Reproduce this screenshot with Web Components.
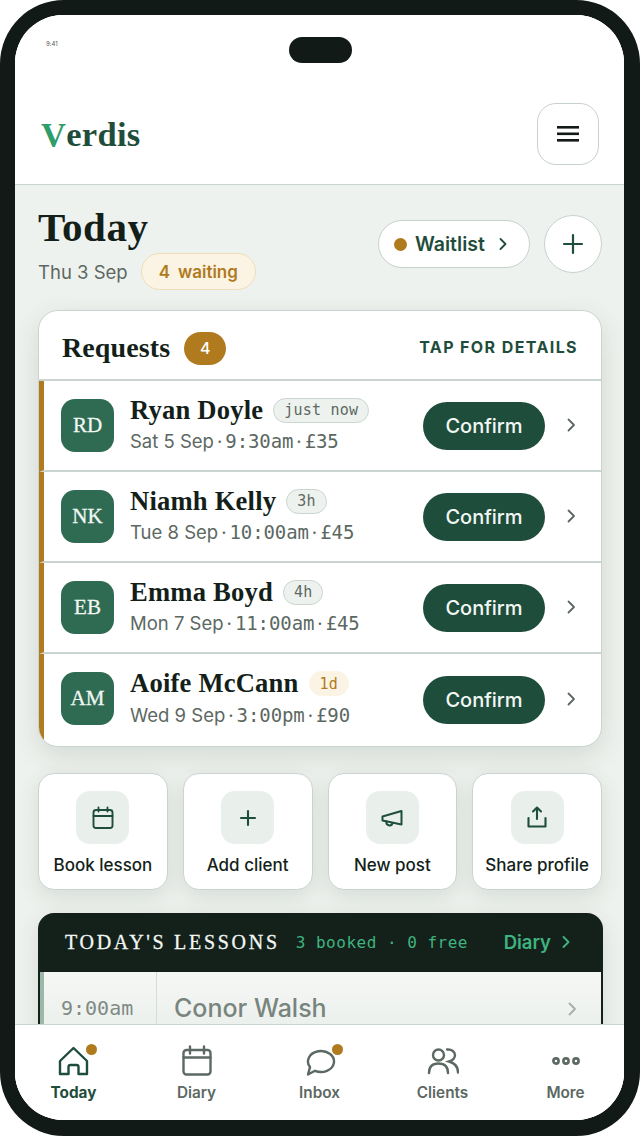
<!DOCTYPE html>
<html lang="en">
<head>
<meta charset="utf-8">
<title>Verdis</title>
<style>
html, body { margin: 0; padding: 0; background: #fff; }
body { font-family: Inter, "Liberation Sans", sans-serif; color: #141f1a; }
</style>
</head>
<body>
<phone-frame>
  <app-header></app-header>
  <main-scroll>
    <today-head></today-head>
    <request-card>
      <request-row initials="RD" age="just now" date="Sat 5 Sep" time="9:30am" price="£35">Ryan Doyle</request-row>
      <request-row initials="NK" age="3h" date="Tue 8 Sep" time="10:00am" price="£45">Niamh Kelly</request-row>
      <request-row initials="EB" age="4h" date="Mon 7 Sep" time="11:00am" price="£45">Emma Boyd</request-row>
      <request-row initials="AM" age="1d" warm date="Wed 9 Sep" time="3:00pm" price="£90" last>Aoife McCann</request-row>
    </request-card>
    <quick-row>
      <quick-tile>
        <svg slot="icon" width="24" height="24" viewBox="0 0 24 24" fill="none" stroke="#1f4d3c" stroke-width="1.9" stroke-linecap="round" stroke-linejoin="round"><rect x="2.5" y="4" width="19" height="18" rx="2.5"/><path d="M2.5 10h19M7.5 1.5v4M16.5 1.5v4"/></svg>
        Book lesson
      </quick-tile>
      <quick-tile>
        <svg slot="icon" width="24" height="24" viewBox="0 0 24 24" fill="none" stroke="#1f4d3c" stroke-width="2.1" stroke-linecap="round"><path d="M12 5v14M5 12h14"/></svg>
        Add client
      </quick-tile>
      <quick-tile>
        <svg slot="icon" width="24" height="24" viewBox="0 0 24 24" fill="none" stroke="#1f4d3c" stroke-width="2" stroke-linejoin="round" stroke-linecap="round"><path d="M2.500 10.500 21.500 5V18.500L2.500 14.500Z"/><path d="M6.500 15.500a3 3 0 0 0 6 1.500"/></svg>
        New post
      </quick-tile>
      <quick-tile>
        <svg slot="icon" width="24" height="24" viewBox="0 0 24 24" fill="none" stroke="#1f4d3c" stroke-width="2.100" stroke-linecap="round" stroke-linejoin="round"><path d="M12 13V1.500M8 5.500 12 1.500 16 5.500"/><path d="M3.500 12V20.500H20.500V12"/></svg>
        Share profile
      </quick-tile>
    </quick-row>
    <lessons-panel></lessons-panel>
  </main-scroll>
  <tab-bar>
    <tab-item active dot>
      <svg slot="icon" width="32" height="32" viewBox="0 0 32 32" fill="none" stroke="#1f4d3c" stroke-width="2.4" stroke-linejoin="round"><path d="M2 16 15.5 3 29 16V29H20.5V22Q20.5 20 18.5 20H12.5Q10.5 20 10.5 22V29H2Z"/></svg>
      Today
    </tab-item>
    <tab-item>
      <svg slot="icon" width="32" height="32" viewBox="0 0 32 32" fill="none" stroke="#5c6862" stroke-width="2.4" stroke-linecap="round" stroke-linejoin="round"><rect x="2.5" y="5" width="27" height="24.5" rx="3"/><path d="M2.5 12.5h27M9 1.5v7M23 1.5v7"/></svg>
      Diary
    </tab-item>
    <tab-item dot>
      <svg slot="icon" width="32" height="32" viewBox="0 0 32 32" fill="none" stroke="#5c6862" stroke-width="2.4" stroke-linejoin="round"><path d="M4 29.500 6 22.100A13 10.500 0 1 1 11 25.800Z"/></svg>
      Inbox
    </tab-item>
    <tab-item>
      <svg slot="icon" width="32" height="32" viewBox="0 0 32 32" fill="none" stroke="#5c6862" stroke-width="2.4" stroke-linecap="round"><circle cx="11.500" cy="10" r="5.500"/><path d="M2 28C2 21 6 18.500 11.500 18.500S21 21 21 28"/><path d="M20 4.500C25 4 28 7 28 10S25 15.500 22 16.500C27.500 18 31 21.500 31 27.500"/></svg>
      Clients
    </tab-item>
    <tab-item>
      <svg slot="icon" width="32" height="32" viewBox="0 0 32 32" fill="none" stroke="#5c6862" stroke-width="2.600"><circle cx="6" cy="16" r="2.600"/><circle cx="16" cy="16" r="2.600"/><circle cx="26" cy="16" r="2.600"/></svg>
      More
    </tab-item>
  </tab-bar>
</phone-frame>

<script>
var SERIF = '"Liberation Serif", "DejaVu Serif", serif';
var MONO = '"DejaVu Sans Mono", "Liberation Mono", monospace';

// device shell, the notch lies over the screen
var tpl_phone = document.createElement("template");
tpl_phone.innerHTML = `
<style>
:host {
  display: block;
  box-sizing: border-box;
  width: 640px;
  height: 1136px;
  border: solid #111a16;
  border-width: 15px 16px 16px 15px;
  border-radius: 64px;
  background: #fff;
  position: relative;
}
.screen {
  height: 100%;
  border-radius: 48px;
  overflow: hidden;
  display: flex;
  flex-direction: column;
  background: #fff;
}
.notch {
  position: absolute;
  left: 274px;
  top: 22px;
  width: 63px;
  height: 26px;
  border-radius: 13px;
  background: #111a16;
}
</style>
<div class="screen"><slot></slot></div>
<div class="notch"></div>`;

class PhoneFrame extends HTMLElement {
  constructor() {
    super();
    this.attachShadow({ mode: "open" });
    this.shadowRoot.appendChild(tpl_phone.content.cloneNode(true));
  }
}
customElements.define("phone-frame", PhoneFrame);

var tpl_header = document.createElement("template");
tpl_header.innerHTML = `
<style>
:host {
  display: block;
  flex: none;
  height: 170px;
  box-sizing: border-box;
  padding: 25px 25px 0 26px;
  background: #fff;
  border-bottom: 1.500px solid #cbd5cf;
}
.time { font: 400 6px Inter, sans-serif; color: #555; margin-left: 5px; height: 8px; line-height: 8px; }
.bar { display: flex; align-items: center; justify-content: space-between; margin-top: 55px; }
.logo { font: 700 34.500px ${SERIF}; color: #1f4d3c; letter-spacing: 0.3px; }
.logo b { color: #2f9d6b; }
.menu {
  box-sizing: border-box;
  width: 62px; height: 62px;
  border: 1.5px solid #c6d2cb;
  border-radius: 19px;
  display: flex; align-items: center; justify-content: center;
}
</style>
<div class="time">9:41</div>
<div class="bar">
  <div class="logo"><b>V</b>erdis</div>
  <div class="menu">
    <svg width="22" height="18" viewBox="0 0 22 18" fill="#111a16"><rect y="1" width="22" height="2.600"/><rect y="7.500" width="22" height="2.600"/><rect y="14" width="22" height="2.600"/></svg>
  </div>
</div>`;

class AppHeader extends HTMLElement {
  constructor() {
    super();
    this.attachShadow({ mode: "open" });
    this.shadowRoot.appendChild(tpl_header.content.cloneNode(true));
  }
}
customElements.define("app-header", AppHeader);

var tpl_main = document.createElement("template");
tpl_main.innerHTML = `
<style>
:host {
  display: block;
  flex: 1;
  min-height: 0;
  overflow: hidden;
  box-sizing: border-box;
  padding: 0 22px 0 23px;
  background: #eef2ee;
}
</style>
<slot></slot>`;

class MainScroll extends HTMLElement {
  constructor() {
    super();
    this.attachShadow({ mode: "open" });
    this.shadowRoot.appendChild(tpl_main.content.cloneNode(true));
  }
}
customElements.define("main-scroll", MainScroll);

var tpl_today = document.createElement("template");
tpl_today.innerHTML = `
<style>
:host {
  display: flex;
  justify-content: space-between;
  height: 125px;
  box-sizing: border-box;
  padding-top: 19px;
}
h1 { margin: 0; font: 700 41px/46px ${SERIF}; color: #141f1a; letter-spacing: 0.5px; }
.sub { display: flex; align-items: center; gap: 13px; margin-top: 3px; font-size: 18.500px; color: #5c6862; }
.waiting {
  box-sizing: border-box;
  height: 37px;
  padding: 0 17px;
  display: flex; align-items: center; gap: 8px;
  border: 1.5px solid #eeddb8;
  border-radius: 19px;
  background: #fbf3e3;
  color: #b07a1e;
  font-size: 17px;
  font-weight: 600;
}
.actions { display: flex; align-items: center; gap: 14px; height: 58px; margin-top: 11px; }
.pill {
  box-sizing: border-box;
  width: 152px; height: 48px;
  padding: 0 21px 0 15px;
  display: flex; align-items: center;
  border: 1.5px solid #c6d2cb;
  border-radius: 24px;
  background: #fff;
  color: #1f4d3c;
  font-size: 19.500px;
  font-weight: 600;
}
.pill i { width: 13px; height: 13px; border-radius: 50%; background: #b07a1e; margin-right: 8px; }
.pill svg { margin-left: auto; }
.plus {
  box-sizing: border-box;
  width: 58px; height: 58px;
  border: 1.5px solid #c6d2cb;
  border-radius: 50%;
  background: #fff;
  display: flex; align-items: center; justify-content: center;
}
</style>
<div>
  <h1>Today</h1>
  <div class="sub">
    <span>Thu 3 Sep</span>
    <span class="waiting"><span>4</span><span>waiting</span></span>
  </div>
</div>
<div class="actions">
  <div class="pill"><i></i>Waitlist
    <svg width="10" height="14" viewBox="0 0 10 14" fill="none" stroke="#1f4d3c" stroke-width="1.8" stroke-linecap="round" stroke-linejoin="round"><path d="M2.500 2 7.500 7 2.500 12"/></svg>
  </div>
  <div class="plus">
    <svg width="22" height="22" viewBox="0 0 22 22" fill="none" stroke="#1f4d3c" stroke-width="2.200" stroke-linecap="round"><path d="M11 2v18M2 11h18"/></svg>
  </div>
</div>`;

class TodayHead extends HTMLElement {
  constructor() {
    super();
    this.attachShadow({ mode: "open" });
    this.shadowRoot.appendChild(tpl_today.content.cloneNode(true));
  }
}
customElements.define("today-head", TodayHead);

var tpl_card = document.createElement("template");
tpl_card.innerHTML = `
<style>
:host {
  display: block;
  box-sizing: border-box;
  height: 436.500px;
  border: 1.5px solid #cbd5cf;
  border-radius: 20px;
  background: #fff;
  overflow: hidden;
  box-shadow: 0 8px 26px rgba(30,55,42,.13);
}
.head {
  box-sizing: border-box;
  height: 69.500px;
  padding: 7px 23px 0 23px;
  display: flex;
  align-items: center;
  border-bottom: 2px solid #cbd5cf;
}
h2 { margin: 0; font: 700 28px ${SERIF}; color: #141f1a; letter-spacing: 0.1px; }
.count {
  margin-left: 14px;
  width: 42px; height: 33px;
  border-radius: 17px;
  background: #b07a1e;
  color: #fff;
  font-size: 16px;
  font-weight: 500;
  display: flex; align-items: center; justify-content: center;
}
.hint { margin-left: auto; margin-top: -3px; font-size: 16px; font-weight: 700; letter-spacing: 1.400px; color: #1f4d3c; }
</style>
<div class="head">
  <h2>Requests</h2>
  <span class="count">4</span>
  <span class="hint">TAP FOR DETAILS</span>
</div>
<slot></slot>`;

class RequestCard extends HTMLElement {
  constructor() {
    super();
    this.attachShadow({ mode: "open" });
    this.shadowRoot.appendChild(tpl_card.content.cloneNode(true));
  }
}
customElements.define("request-card", RequestCard);

var tpl_row = document.createElement("template");
tpl_row.innerHTML = `
<style>
:host {
  display: flex;
  align-items: center;
  box-sizing: border-box;
  height: 91.200px;
  padding: 0 24px 0 17px;
  border-left: 5px solid #b07a1e;
  border-bottom: 2px solid #cbd5cf;
}
:host([last]) { border-bottom-color: transparent; }
.avatar {
  flex: none;
  width: 53px; height: 53px;
  border-radius: 14px;
  background: #2f6b52;
  color: #f2f7f3;
  font: 400 21px ${SERIF};
  -webkit-text-stroke: 0.3px #f2f7f3;
  display: flex; align-items: center; justify-content: center;
}
.info { flex: 1; min-width: 0; margin: 0 0 3px 16px; }
.top { display: flex; align-items: center; gap: 10px; height: 30px; }
.name { font: 700 26.600px ${SERIF}; color: #141f1a; letter-spacing: 0.2px; white-space: nowrap; }
.age {
  box-sizing: border-box;
  height: 25px;
  padding: 0 10px;
  display: flex; align-items: center;
  border: 1.500px solid #cbd5cf;
  border-radius: 13px;
  background: #eef2ee;
  color: #5c6862;
  font: 400 15px ${MONO};
  letter-spacing: 0.2px;
}
:host([warm]) .age { background: #fbf3e3; border-color: #fbf3e3; color: #b07a1e; }
.sub { display: flex; align-items: center; margin-top: 5px; font-size: 18.500px; color: #5c6862; white-space: nowrap; }
.sub .m { font-family: ${MONO}; font-size: 19px; letter-spacing: -0.100px; }
.sub i { font-style: normal; margin: 0 3px; }
.go {
  flex: none;
  width: 122px; height: 48px;
  margin-top: 2px;
  border-radius: 24px;
  background: #1f4d3c;
  color: #f2f7f3;
  font-size: 20px;
  font-weight: 500;
  display: flex; align-items: center; justify-content: center;
}
svg { flex: none; margin-left: 21px; }
</style>
<div class="avatar"></div>
<div class="info">
  <div class="top"><span class="name"><slot></slot></span><span class="age"></span></div>
  <div class="sub"><span class="d"></span><i>·</i><span class="m t"></span><i>·</i><span class="m p"></span></div>
</div>
<div class="go">Confirm</div>
<svg width="11" height="16" viewBox="0 0 11 16" fill="none" stroke="#5c6862" stroke-width="1.800" stroke-linecap="round" stroke-linejoin="round"><path d="M2.500 2.500 8 8 2.500 13.500"/></svg>`;

class RequestRow extends HTMLElement {
  constructor() {
    super();
    this.attachShadow({ mode: "open" });
    this.shadowRoot.appendChild(tpl_row.content.cloneNode(true));
  }
  connectedCallback() {
    var root = this.shadowRoot;
    root.querySelector(".avatar").textContent = this.getAttribute("initials");
    root.querySelector(".age").textContent = this.getAttribute("age");
    root.querySelector(".d").textContent = this.getAttribute("date");
    root.querySelector(".t").textContent = this.getAttribute("time");
    root.querySelector(".p").textContent = this.getAttribute("price");
  }
}
customElements.define("request-row", RequestRow);

var tpl_quick = document.createElement("template");
tpl_quick.innerHTML = `
<style>
:host {
  display: grid;
  grid-template-columns: repeat(4, 1fr);
  gap: 15px;
  margin-top: 26.500px;
}
</style>
<slot></slot>`;

class QuickRow extends HTMLElement {
  constructor() {
    super();
    this.attachShadow({ mode: "open" });
    this.shadowRoot.appendChild(tpl_quick.content.cloneNode(true));
  }
}
customElements.define("quick-row", QuickRow);

var tpl_tile = document.createElement("template");
tpl_tile.innerHTML = `
<style>
:host {
  display: flex;
  flex-direction: column;
  align-items: center;
  box-sizing: border-box;
  height: 116.500px;
  padding-top: 17px;
  border: 1.500px solid #cbd5cf;
  border-radius: 16px;
  background: #fff;
  box-shadow: 0 6px 22px rgba(30,55,42,.12);
  color: #141f1a;
  font-size: 17px;
  font-weight: 500;
  white-space: nowrap;
}
.ic {
  width: 53px; height: 53px;
  border-radius: 14px;
  background: #e9f0eb;
  display: flex; align-items: center; justify-content: center;
  margin-bottom: 10.500px;
}
</style>
<div class="ic"><slot name="icon"></slot></div>
<slot></slot>`;

class QuickTile extends HTMLElement {
  constructor() {
    super();
    this.attachShadow({ mode: "open" });
    this.shadowRoot.appendChild(tpl_tile.content.cloneNode(true));
  }
}
customElements.define("quick-tile", QuickTile);

var tpl_lessons = document.createElement("template");
tpl_lessons.innerHTML = `
<style>
:host {
  display: block;
  margin-top: 23px;
  width: 565px;
  border-radius: 16px 16px 0 0;
  background: #14211b;
  padding: 0 2px;
  box-sizing: border-box;
  box-shadow: 0 6px 22px rgba(30,55,42,.12);
}
.head {
  box-sizing: border-box;
  height: 59px;
  display: flex;
  align-items: center;
  padding: 0 30px 0 25px;
}
h3 { margin: 0; font: 400 20px ${SERIF}; -webkit-text-stroke: 0.3px #f2f7f3; letter-spacing: 2.700px; color: #f2f7f3; white-space: nowrap; }
.stat { margin-left: 16px; font: 400 16px ${MONO}; letter-spacing: 0.500px; color: #3fb37f; white-space: pre; }
.link { margin-left: auto; display: flex; align-items: center; gap: 10px; font-size: 18.500px; font-weight: 600; color: #3fb37f; }
.row {
  display: flex;
  align-items: stretch;
  height: 90px;
  border-left: 4px solid #9db8ab;
  background: linear-gradient(#f5f7f5, #e6ecE8);
}
.time {
  box-sizing: border-box;
  width: 113px;
  padding: 24px 0 0 17px;
  border-right: 1.500px solid #d5ddd8;
  font: 400 20px ${MONO};
  color: #7f8a84;
}
.who { flex: 1; padding: 21px 0 0 17px; font-size: 25px; font-weight: 500; color: #78847e; }
svg.chev { margin: 29px 23px 0 0; }
</style>
<div class="head">
  <h3>TODAY'S LESSONS</h3>
  <span class="stat">3 booked · 0 free</span>
  <span class="link">Diary
    <svg width="10" height="14" viewBox="0 0 10 14" fill="none" stroke="#3fb37f" stroke-width="1.900" stroke-linecap="round" stroke-linejoin="round"><path d="M2.500 2 7.500 7 2.500 12"/></svg>
  </span>
</div>
<div class="row">
  <div class="time">9:00am</div>
  <div class="who">Conor Walsh</div>
  <svg class="chev" width="11" height="16" viewBox="0 0 11 16" fill="none" stroke="#a5aea9" stroke-width="1.800" stroke-linecap="round" stroke-linejoin="round"><path d="M2.500 2.500 8 8 2.500 13.500"/></svg>
</div>`;

class LessonsPanel extends HTMLElement {
  constructor() {
    super();
    this.attachShadow({ mode: "open" });
    this.shadowRoot.appendChild(tpl_lessons.content.cloneNode(true));
  }
}
customElements.define("lessons-panel", LessonsPanel);

var tpl_tabs = document.createElement("template");
tpl_tabs.innerHTML = `
<style>
:host {
  display: grid;
  flex: none;
  grid-template-columns: repeat(5, 123px);
  justify-content: center;
  box-sizing: border-box;
  height: 96px;
  border-top: 1.500px solid #cbd5cf;
  background: #fff;
}
</style>
<slot></slot>`;

class TabBar extends HTMLElement {
  constructor() {
    super();
    this.attachShadow({ mode: "open" });
    this.shadowRoot.appendChild(tpl_tabs.content.cloneNode(true));
  }
}
customElements.define("tab-bar", TabBar);

var tpl_tab = document.createElement("template");
tpl_tab.innerHTML = `
<style>
:host {
  display: flex;
  flex-direction: column;
  align-items: center;
  padding-top: 20px;
  color: #5c6862;
  font-size: 15.300px;
  font-weight: 600;
}
:host([active]) { color: #1f4d3c; font-weight: 700; }
.ic { position: relative; width: 32px; height: 32px; margin-bottom: 6px; }
.dot {
  display: none;
  position: absolute;
  left: 28px; top: -1.500px;
  width: 11px; height: 11px;
  border-radius: 50%;
  background: #b07a1e;
}
:host([dot]) .dot { display: block; }
</style>
<div class="ic"><slot name="icon"></slot><span class="dot"></span></div>
<slot></slot>`;

class TabItem extends HTMLElement {
  constructor() {
    super();
    this.attachShadow({ mode: "open" });
    this.shadowRoot.appendChild(tpl_tab.content.cloneNode(true));
  }
}
customElements.define("tab-item", TabItem);
</script>
</body>
</html>
